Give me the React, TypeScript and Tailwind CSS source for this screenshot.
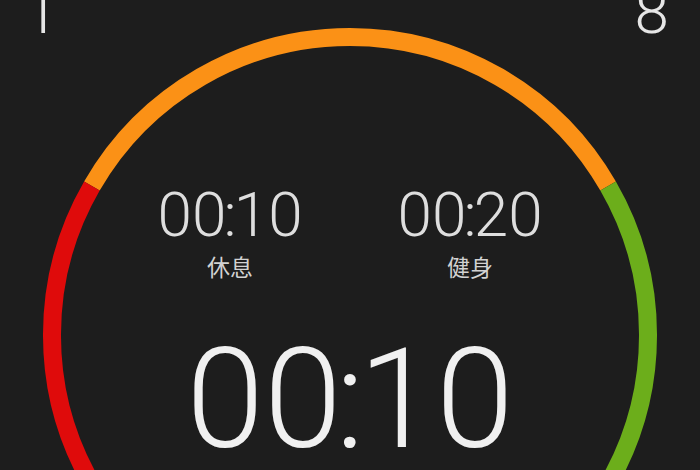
import React from "react";

const R = 298;
const CX = 350;
const CY = 335;

function pt(deg: number) {
  const a = (deg * Math.PI) / 180;
  return `${(CX + R * Math.cos(a)).toFixed(1)} ${(CY - R * Math.sin(a)).toFixed(1)}`;
}

function Ring() {
  const left = pt(150);
  const right = pt(30);
  const bottom = pt(270);
  return (
    <svg className="absolute inset-0" width={700} height={470} viewBox="0 0 700 470">
      <g fill="none" strokeWidth={18}>
        <path d={`M ${left} A ${R} ${R} 0 0 1 ${right}`} stroke="#fb9116" />
        <path d={`M ${left} A ${R} ${R} 0 0 0 ${bottom}`} stroke="#df0b0b" />
        <path d={`M ${right} A ${R} ${R} 0 0 1 ${bottom}`} stroke="#6cae1b" />
      </g>
    </svg>
  );
}

function Time({ text, className }: { text: string; className: string }) {
  const [a, b] = text.split(":");
  return (
    <div className={`leading-none font-light ${className}`}>
      {a}
      <span className="mx-[-0.045em]">:</span>
      {b}
    </div>
  );
}

const SPLITS = [
  { time: "00:10", label: "休息" },
  { time: "00:20", label: "健身" },
];

export default function App() {
  return (
    <div className="relative h-[470px] w-[700px] overflow-hidden bg-[#1d1d1d] font-['Roboto','Noto_Sans_CJK_SC',sans-serif]">
      <Ring />
      <div className="relative flex flex-col">
        <div className="-mt-[19px] flex justify-between pl-[24px] pr-[31px] text-[62px] leading-none font-light text-[#e6e6e6]">
          <span>1</span>
          <span>8</span>
        </div>
        <div className="mt-[141px] flex justify-center gap-[80px]">
          {SPLITS.map((s) => (
            <div key={s.label} className="flex w-[160px] flex-col items-center">
              <Time text={s.time} className="text-[62px] text-[#dedede]" />
              <div className="mt-[11px] text-[23px] leading-none text-[#d2d2d2]">{s.label}</div>
            </div>
          ))}
        </div>
        <div className="mt-[49px] flex justify-center">
          <Time text="00:10" className="text-[140px] text-[#f0f0f0]" />
        </div>
      </div>
    </div>
  );
}
